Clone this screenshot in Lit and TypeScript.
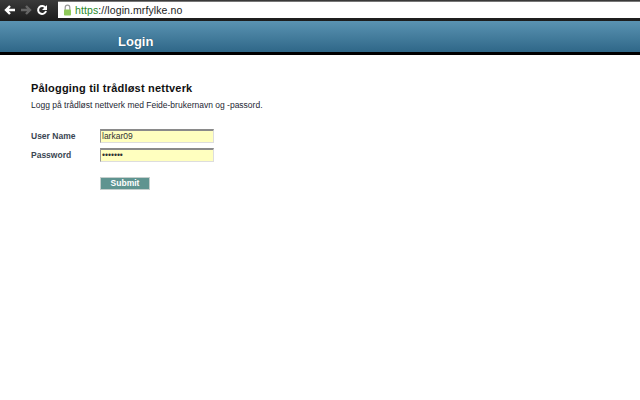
import { LitElement, html, css } from "lit";
import { customElement } from "lit/decorators.js";

@customElement("app-root")
export class AppRoot extends LitElement {
  static styles = css`
    :host { display: block; width: 640px; height: 400px; background: #fff; overflow: hidden; font-family: "Liberation Sans", Arial, sans-serif; }
    .chrome { height: 21px; background: linear-gradient(#3a3a3a, #1c1c1c); display: flex; align-items: flex-start; }
    .navs { width: 58px; height: 19px; display: flex; align-items: center; gap: 4px; padding-left: 4px; box-sizing: border-box; flex: none; }
    .navs svg { display: block; flex: none; }
    .omni { flex: 1; height: 16px; margin-top: 1px; background: #fff; border-top: 1px solid #777; display: flex; align-items: center; gap: 3px; padding-left: 5px; font-size: 10.5px; color: #222; letter-spacing: 0.1px; }
    .omni .s { color: #2a8a2a; }
    .omni svg { flex: none; }
    .banner { height: 31px; background: linear-gradient(#5a93b2, #2f6788); border-bottom: 3px solid #000; box-sizing: content-box; padding-left: 118px; display: flex; align-items: flex-end; padding-bottom: 0; margin-top: 0; }
    .banner span { color: #fff; font-weight: bold; font-size: 13px; line-height: 15px; margin-bottom: 3px; text-shadow: 0 0 1px #1d3f55; }
    .content { padding: 27px 0 0 31px; }
    h1 { margin: 0; font-size: 11px; line-height: 13px; font-weight: bold; color: #111; letter-spacing: 0.2px; }
    .intro { margin: 5px 0 0; font-size: 8.5px; line-height: 11px; color: #1d2733; }
    form { margin-top: 18px; display: grid; grid-template-columns: 69px 114px; row-gap: 5px; align-items: center; }
    label { font-size: 8.5px; font-weight: bold; color: #3a4652; }
    .field { height: 14px; box-sizing: border-box; background: #ffffbf; border: 1px solid #ddd; border-top: 2px solid #8a8a8a; border-left: 1px solid #999; font-size: 8.5px; line-height: 11px; padding-left: 1px; color: #333; display: flex; align-items: center; }
    .btn { grid-column: 2; margin-top: 10px; width: 50px; height: 13px; background: #5f9490; border: 1px solid #c5cfcd; box-sizing: border-box; color: #fff; font-size: 8.5px; font-weight: bold; text-align: center; line-height: 11px; }
  `;

  render() {
    return html`
      <div class="chrome">
        <div class="navs">
          <svg width="12" height="12" viewBox="0 0 12 12"><path d="M11 6H3M6 2L2 6l4 4" fill="none" stroke="#fff" stroke-width="2.4"/></svg>
          <svg width="12" height="12" viewBox="0 0 12 12"><path d="M1 6h8M6 2l4 4-4 4" fill="none" stroke="#666" stroke-width="2.4"/></svg>
          <svg width="12" height="12" viewBox="0 0 12 12"><path d="M9.6 4A4 4 0 1 0 10 7" fill="none" stroke="#fff" stroke-width="2"/><path d="M11 1v5H6z" fill="#fff"/></svg>
        </div>
        <div class="omni">
          <svg width="9" height="12" viewBox="0 0 9 12"><path d="M2.2 6V3.5a2.3 2.3 0 0 1 4.6 0V6" fill="none" stroke="#999" stroke-width="1.2"/><rect x="1" y="5.5" width="7" height="6" rx=".8" fill="#8fca5a"/></svg>
          <span><span class="s">https</span>://login.mrfylke.no</span>
        </div>
      </div>
      <div class="banner"><span>Login</span></div>
      <div class="content">
        <h1>Pålogging til trådløst nettverk</h1>
        <p class="intro">Logg på trådløst nettverk med Feide-brukernavn og -passord.</p>
        <form>
          <label>User Name</label><div class="field">larkar09</div>
          <label>Password</label><div class="field">•••••••</div>
          <div class="btn">Submit</div>
        </form>
      </div>
    `;
  }
}
